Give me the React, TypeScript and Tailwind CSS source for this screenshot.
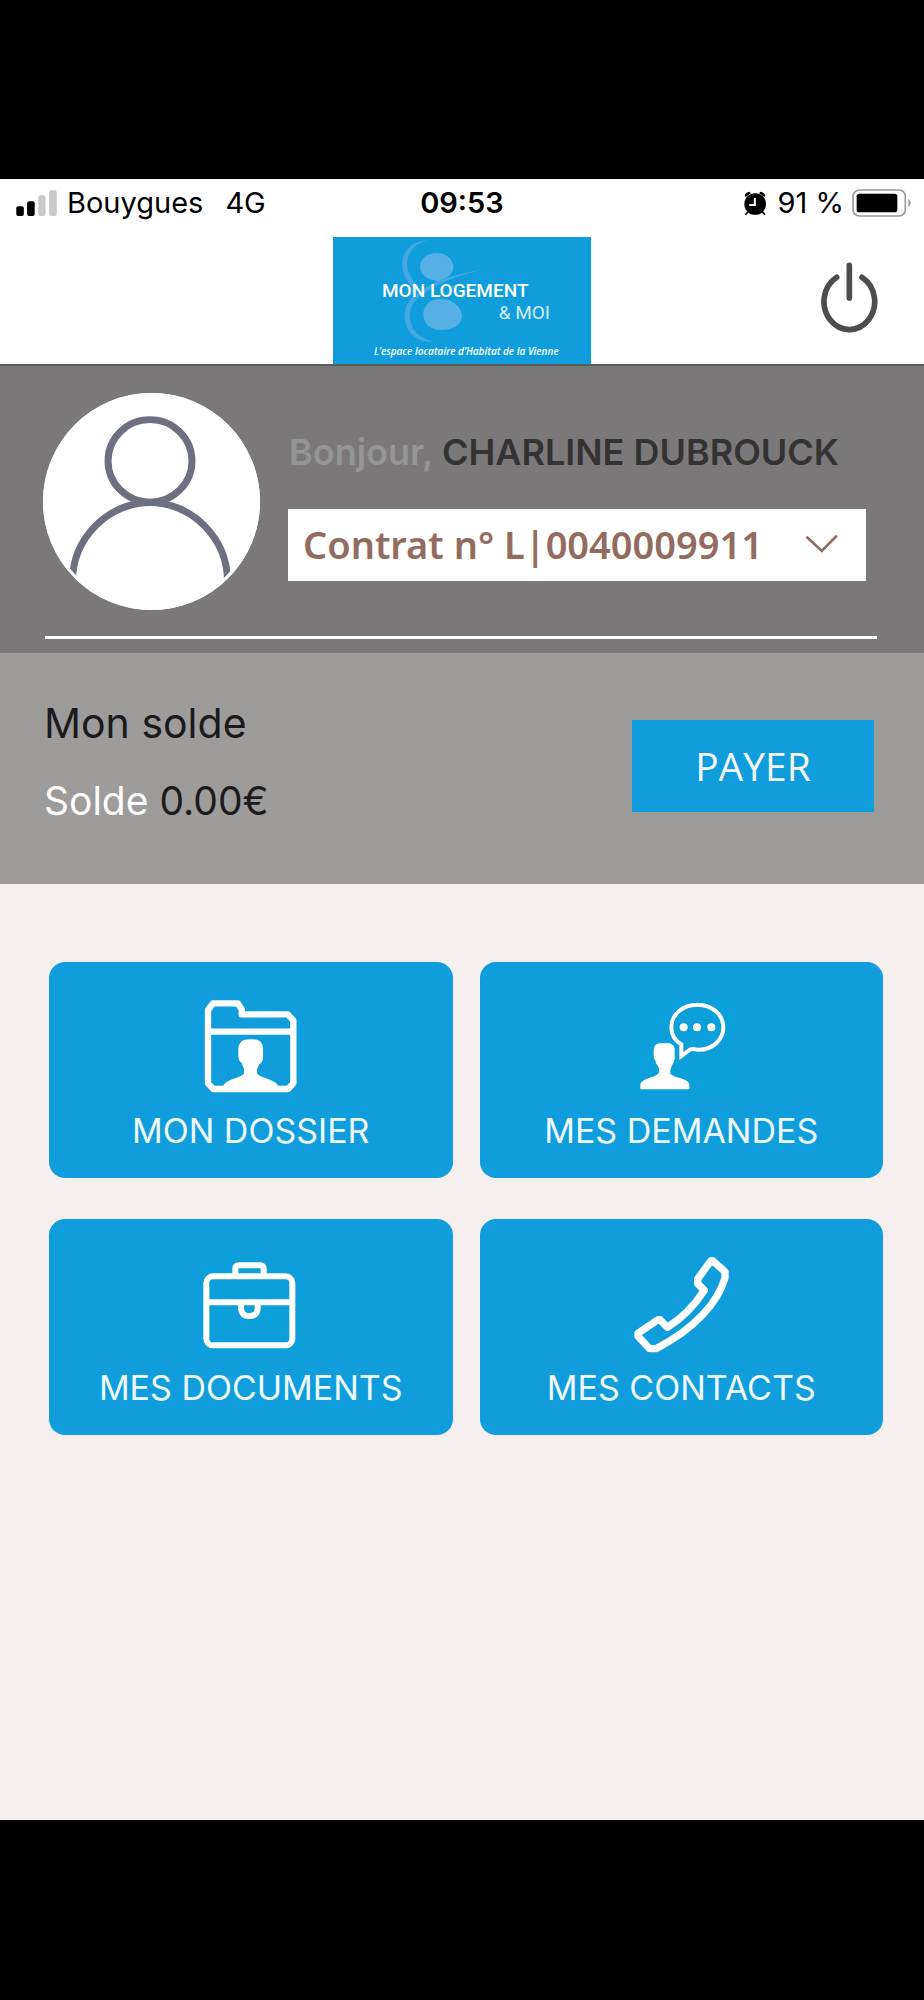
import type { ReactNode } from "react";

function SignalIcon() {
  return (
    <svg viewBox="48 56 123 79" className="h-[26px] w-[41px]" aria-hidden="true">
      <rect x="48" y="105" width="23" height="30" rx="6" fill="#000" />
      <rect x="81" y="90" width="23" height="45" rx="6" fill="#000" />
      <rect x="115" y="72" width="22" height="63" rx="6" fill="#c9c9c9" />
      <rect x="148" y="57" width="23" height="78" rx="6" fill="#c9c9c9" />
    </svg>
  );
}

function AlarmIcon() {
  return (
    <svg viewBox="841 58 67 75" className="h-[25px] w-[22px]" aria-hidden="true">
      <circle cx="875" cy="97" r="33" fill="#000" />
      <path d="M843 71 Q845 62 858 60 L862 64 L846 76 Z M906 71 Q904 62 891 60 L887 64 L903 76 Z" fill="#000" />
      <path d="M853 121 L845 130 M897 121 L905 130" stroke="#000" strokeWidth="5" />
      <path d="M874 79 V100 H857" fill="none" stroke="#fff" strokeWidth="6" />
    </svg>
  );
}

function BatteryIcon() {
  return (
    <svg viewBox="1168 54 177 84" className="h-[28px] w-[59px]" aria-hidden="true">
      <rect x="1171" y="57" width="157" height="78" rx="19" fill="#fff" stroke="#9a9a9a" strokeWidth="5" />
      <rect x="1182" y="68" width="122" height="56" rx="8" fill="#000" />
      <path d="M1337 84 Q1344 88 1344 96 Q1344 104 1337 109 Z" fill="#9a9a9a" />
    </svg>
  );
}

function PowerIcon() {
  return (
    <svg viewBox="1075 277 171 213" className="h-[71px] w-[57px]" aria-hidden="true">
      <path
        d="M1122 323 A76 84 0 1 0 1198 323 M1160 287 V385"
        fill="none"
        stroke="#4d4d4d"
        strokeWidth="17"
        strokeLinecap="round"
      />
    </svg>
  );
}

function LogoMark() {
  return (
    <svg viewBox="39 22 774 381" className="absolute inset-0 h-full w-full" aria-hidden="true">
      <g fill="#56b0e6">
        <ellipse cx="350" cy="111" rx="50" ry="41" />
        <path d="M310 250 C312 222 338 206 362 207 C396 207 426 232 426 258 C426 286 396 301 364 301 C330 301 308 280 310 250 Z" />
        <path d="M378 134 C372 146 366 152 356 158 L340 150 Z" />
      </g>
      <path
        d="M322 31 C268 36 247 70 247 104 C247 134 262 158 284 180 L296 170 C272 148 262 128 262 102 C262 70 282 44 322 31 Z"
        fill="#45a8e2"
      />
      <path
        d="M486 121 C420 130 340 152 302 186 C262 206 252 236 254 262 C258 310 290 340 344 336 C298 328 272 302 270 262 C268 232 284 208 312 192 C350 160 420 136 486 121 Z"
        fill="#45a8e2"
      />
    </svg>
  );
}

function AvatarIcon() {
  return (
    <svg viewBox="130 98 651 652" className="h-[217px] w-[217px] shrink-0 rounded-full bg-white" role="img" aria-label="Profil">
      <g fill="none" stroke="#6d7081" strokeWidth="21">
        <ellipse cx="451" cy="302" rx="126" ry="124" />
        <path d="M218 670 C216 530 330 427 451 427 C572 427 686 530 684 670" />
      </g>
      <circle cx="455" cy="424" r="330" fill="none" stroke="#fff" strokeWidth="26" />
    </svg>
  );
}

function TileSvg({ viewBox, children }: { viewBox: string; children: ReactNode }) {
  return (
    <svg viewBox={viewBox} className="h-[100px] w-[106px]" aria-hidden="true">
      {children}
    </svg>
  );
}

function FolderIcon() {
  return (
    <TileSvg viewBox="476 140 318 300">
      <path
        d="M506 182 L521 162 H595 L607 180 V195 H745 L762 213 V402 L746 419 H522 L506 402 Z M506 247 H762"
        fill="none"
        stroke="#fff"
        strokeWidth="19"
        strokeLinejoin="round"
      />
      <path
        d="M613 272 Q634 267 656 272 Q671 280 671 298 V328 Q668 341 660 345 L653 360 V371 Q658 380 676 385 Q712 396 718 412 H550 Q558 394 592 385 Q612 379 614 371 V360 L607 340 Q598 336 597 322 V298 Q598 280 613 272 Z"
        fill="#fff"
      />
    </TileSvg>
  );
}

function ChatIcon() {
  return (
    <TileSvg viewBox="476 140 318 300">
      <rect x="476" y="140" width="318" height="300" fill="#0ca0da" />
      <path
        d="M636 320 V285 C616 274 606 256 606 234 C606 196 640 166 684 166 C728 166 762 196 762 234 C762 273 728 303 684 301 Q672 298 663 300 Z"
        fill="none"
        stroke="#fff"
        strokeWidth="12"
      />
      <g fill="#fff">
        <circle cx="643" cy="234" r="12" />
        <circle cx="683" cy="234" r="12" />
        <circle cx="726" cy="234" r="12" />
        <path d="M568 282 H602 Q616 288 616 300 V330 Q613 342 607 350 L603 362 V373 Q612 382 632 386 Q660 394 660 406 V420 H513 V404 Q518 392 545 384 Q566 378 570 368 L568 354 Q560 344 558 334 Q552 326 553 318 V302 Q554 286 568 282 Z" />
      </g>
    </TileSvg>
  );
}

function BriefcaseIcon() {
  return (
    <TileSvg viewBox="476 129 318 300">
      <rect x="476" y="129" width="318" height="300" fill="#0d9fda" />
      <g fill="none" stroke="#fff" strokeWidth="18">
        <rect x="501" y="199" width="258" height="207" rx="20" />
        <path d="M501 277 H759" />
        <path d="M588 199 V177 Q588 166 598 166 H662 Q673 166 673 177 V199" />
        <path d="M605 281 V296 Q607 318 630 318 Q653 318 655 296 V281" />
      </g>
    </TileSvg>
  );
}

function PhoneIcon() {
  return (
    <TileSvg viewBox="476 129 318 300">
      <path
        d="M730 152 L767 185 V204 C746 276 678 356 560 416 H541 L506 379 V370 L566 329 H572 L594 352 C640 324 676 286 705 241 L685 221 V207 L725 152 Z"
        fill="none"
        stroke="#fff"
        strokeWidth="22"
        strokeLinejoin="round"
      />
    </TileSvg>
  );
}

const tiles = [
  { label: "MON DOSSIER", icon: <FolderIcon /> },
  { label: "MES DEMANDES", icon: <ChatIcon /> },
  { label: "MES DOCUMENTS", icon: <BriefcaseIcon /> },
  { label: "MES CONTACTS", icon: <PhoneIcon /> },
];

export default function App() {
  return (
    <div className="flex min-h-screen flex-col bg-black pt-[179px] pb-[180px] font-['Inter',sans-serif]">
      <header className="border-b-2 border-[#5c595a] bg-white">
        <div className="grid h-[58px] grid-cols-3 items-start px-4 pt-1 text-[29px] leading-10 text-black">
          <div className="flex items-center">
            <SignalIcon />
            <span className="ml-[10px]">Bouygues</span>
            <span className="ml-[22px]">4G</span>
          </div>
          <time className="text-center font-semibold">09:53</time>
          <div className="-mr-[3px] flex items-center justify-end">
            <AlarmIcon />
            <span className="mr-2 ml-3">91 %</span>
            <BatteryIcon />
          </div>
        </div>
        <div className="grid grid-cols-[1fr_auto_1fr]">
          <span />
          <h1 className="relative flex h-[127px] w-[258px] flex-col bg-[#0f9edb] pt-[43px] font-['Roboto',sans-serif] text-[19px] leading-[22px] text-white">
            <LogoMark />
            <span className="relative pl-[49px] font-medium">MON LOGEMENT</span>
            <span className="relative pr-[41px] text-right text-[#d6edf9]">&amp; MOI</span>
            <span className="relative mt-[19px] pl-[41px] font-['Open_Sans',sans-serif] text-[10px] leading-4 font-semibold whitespace-nowrap italic">
              L’espace locataire d’Habitat de la Vienne
            </span>
          </h1>
          <div className="flex items-start justify-end pt-[25px] pr-[46px]">
            <button type="button" aria-label="Déconnexion">
              <PowerIcon />
            </button>
          </div>
        </div>
      </header>

      <section className="bg-[#7b7879] px-[43px] pt-[27px] pb-[14px]">
        <div className="flex">
          <AvatarIcon />
          <div className="ml-7 flex-1 pr-[15px] pt-[39px]">
            <h2 className="pl-[1px] text-[36px] leading-10 font-semibold whitespace-nowrap text-[#333333]">
              <span className="text-[#959595]">Bonjour,</span> CHARLINE DUBROUCK
            </h2>
            <div className="relative mt-[37px]">
              <select
                aria-label="Contrat"
                className="block h-[72px] w-full appearance-none rounded-none bg-white pb-[2px] pl-[15px] font-['Noto_Sans','Open_Sans',sans-serif] text-[38px] font-semibold text-[#946c5f]"
              >
                <option>Contrat n° L|0040009911</option>
              </select>
              <svg
                viewBox="1030 522 98 60"
                className="pointer-events-none absolute top-[25px] right-[28px] h-[20px] w-[33px]"
                aria-hidden="true"
              >
                <path d="M1034 530 L1080 573 L1125 527" fill="none" stroke="#946c5f" strokeWidth="8" />
              </svg>
            </div>
          </div>
        </div>
        <hr className="mt-[26px] mr-[4px] ml-[2px] border-t-[3px] border-white" />
      </section>

      <section className="flex items-center justify-between bg-[#9d9c9a] pt-[44px] pr-[50px] pb-[49px] pl-[44px]">
        <div className="pb-2">
          <h2 className="text-[41px] leading-[52px] text-[#1b1a1c]">Mon solde</h2>
          <p className="mt-[26px] text-[39px] leading-[52px] text-[#1b1a1c]">
            <span className="text-white">Solde</span> 0.00€
          </p>
        </div>
        <button
          type="button"
          className="h-[92px] w-[242px] bg-[#0f9edb] font-['Open_Sans',sans-serif] text-[39px] font-medium text-[#f3f6f8]"
        >
          PAYER
        </button>
      </section>

      <main className="flex-1 bg-[#f5efef] pt-[78px] pr-[41px] pl-[49px]">
        <nav className="grid grid-cols-2 gap-x-[27px] gap-y-[41px]">
          {tiles.map((tile) => (
            <a
              key={tile.label}
              href="#"
              className="flex h-[216px] flex-col items-center rounded-2xl bg-[#0f9edb] pt-[34px] text-[34px] leading-10 text-[#edf9ff]"
            >
              {tile.icon}
              <span className="mt-[15px] whitespace-nowrap">{tile.label}</span>
            </a>
          ))}
        </nav>
      </main>
    </div>
  );
}
